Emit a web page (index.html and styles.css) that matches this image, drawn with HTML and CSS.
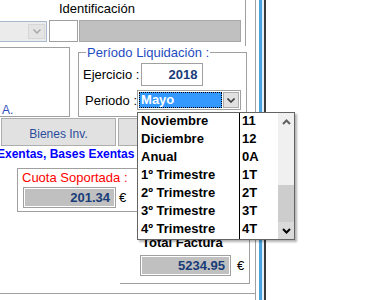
FILE: index.html
```html
<!DOCTYPE html>
<html lang="es">
<head>
    <meta charset="UTF-8" />
    <title>Liquidación IVA</title>
    <link rel="stylesheet" href="styles.css">
</head>
<body>
    <div class="screen">
        <div class="form">
            <div class="top-section">
                <div class="ident">Identificación</div>
                <div class="fields">
                    <div class="combo-off">
                        <span class="arrow-off">
                            <svg width="8" height="5" viewBox="0 0 8 5"><polyline points="0.5,0.5 4,4 7.5,0.5" fill="none" stroke="#a8a8a8" stroke-width="1.5"/></svg>
                        </span>
                    </div>
                    <div class="box-white"></div>
                    <div class="box-gray"></div>
                </div>
            </div>

            <div class="mid">
                <div class="left-panel"><span class="company">A.</span></div>
                <fieldset class="period">
                    <legend>Período Liquidación :</legend>
                    <div class="row row-year">
                        <label>Ejercicio :</label>
                        <div class="year-input">2018</div>
                    </div>
                    <div class="row row-period">
                        <label>Periodo :</label>
                        <div class="period-combo">
                            <span class="selected">Mayo</span>
                            <span class="arrow">
                                <svg width="8" height="5" viewBox="0 0 8 5"><polyline points="0.5,0.5 4,4 7.5,0.5" fill="none" stroke="#404040" stroke-width="1.6"/></svg>
                            </span>
                        </div>
                    </div>
                </fieldset>
            </div>

            <div class="tabs">
                <button class="tab">Bienes Inv.</button>
                <button class="tab tab-wide"></button>
            </div>

            <div class="exentas">Exentas, Bases Exentas</div>

            <div class="cuota-box">
                <div class="cuota-label">Cuota Soportada :</div>
                <div class="amount-row">
                    <div class="amount">201.34</div>
                    <span class="euro">€</span>
                </div>
            </div>

            <div class="total-box">
                <div class="total-label">Total Factura</div>
                <div class="amount-row total-row">
                    <div class="amount amount-total">5234.95</div>
                    <span class="euro euro-total">€</span>
                </div>
            </div>

            <div class="bottom-line"></div>

            <div class="dropdown">
                <div class="items">
                    <div class="item"><span class="name">Noviembre</span><span class="code">11</span></div>
                    <div class="item"><span class="name">Diciembre</span><span class="code">12</span></div>
                    <div class="item"><span class="name">Anual</span><span class="code">0A</span></div>
                    <div class="item"><span class="name">1º Trimestre</span><span class="code">1T</span></div>
                    <div class="item"><span class="name">2º Trimestre</span><span class="code">2T</span></div>
                    <div class="item"><span class="name">3º Trimestre</span><span class="code">3T</span></div>
                    <div class="item"><span class="name">4º Trimestre</span><span class="code">4T</span></div>
                </div>
                <div class="scrollbar">
                    <div class="sb-btn">
                        <svg width="9" height="6" viewBox="0 0 9 6"><polyline points="1,5 4.5,1.5 8,5" fill="none" stroke="#606060" stroke-width="2"/></svg>
                    </div>
                    <div class="sb-track"><div class="sb-thumb"></div></div>
                    <div class="sb-btn sb-down">
                        <svg width="9" height="6" viewBox="0 0 9 6"><polyline points="1,1 4.5,4.5 8,1" fill="none" stroke="#000000" stroke-width="2"/></svg>
                    </div>
                </div>
            </div>
        </div>
        <div class="sash"></div>
    </div>
</body>
</html>
```

FILE: styles.css
```css
body {
    margin: 0;
    background-color: #ffffff;
    font-family: "Liberation Sans", Arial, sans-serif;
    font-size: 13px;
    color: #000000;
}

.screen {
    display: flex;
    height: 300px;
    overflow: hidden;
}

.form {
    position: relative;
    width: 255px;
    flex-shrink: 0;
    border-right: 1px solid #a0a0a0;
}

.sash {
    margin-left: 3px;
    width: 2px;
    border-left: 3px solid #4aa3df;
    border-right: 2px solid #3a3a3a;
    background-color: #e6f0fa;
}

/* cabecera */

.top-section {
    width: 245px;
    height: 46px;
    border-right: 1px solid #a0a0a0;
}

.ident {
    height: 20px;
    line-height: 18px;
    padding-left: 59px;
}

.fields {
    display: flex;
    height: 22px;
}

.combo-off {
    width: 58px;
    height: 21px;
    margin: 1px 0 0 -11px;
    box-sizing: border-box;
    border: 1px solid #a9b8cf;
    background-color: #ebebeb;
    display: flex;
    justify-content: flex-end;
    align-items: center;
    padding-right: 1px;
}

.arrow-off {
    width: 17px;
    height: 15px;
    box-sizing: border-box;
    border: 1px solid #d6d6d6;
    background-color: #e4e4e4;
    display: flex;
    align-items: center;
    justify-content: center;
}

.box-white {
    width: 29px;
    height: 22px;
    margin-left: 2px;
    box-sizing: border-box;
    border: 1px solid #a0a0a0;
    background-color: #ffffff;
}

.box-gray {
    width: 162px;
    height: 22px;
    margin-left: 1px;
    box-sizing: border-box;
    border: 1px solid #a8a8a8;
    background-color: #c0c0c0;
}

/* periodo */

.mid {
    display: flex;
    height: 71px;
}

.left-panel {
    width: 71px;
    height: 70px;
    margin: 1px 0 0 -1px;
    box-sizing: border-box;
    border: 1px solid #a0a0a0;
    display: flex;
    align-items: flex-end;
    padding-left: 2px;
}

.company {
    font-size: 12px;
    line-height: 12px;
    color: #2f4fc0;
}

.period {
    width: 169px;
    margin: -1px 0 0 8px;
    padding: 0 0 6px 0;
    box-sizing: border-box;
    min-width: 0;
    border: 1px solid #a0a0a0;
}

    .period legend {
        margin-left: 7px;
        padding: 0 1px;
        line-height: 15px;
        color: #1e4cc0;
    }

.row {
    display: flex;
    align-items: center;
}

.row-year {
    margin: 3px 0 0 4px;
}

.row-period {
    margin: 4px 0 0 6px;
}

.year-input {
    width: 62px;
    height: 23px;
    margin-left: 2px;
    box-sizing: border-box;
    border: 1px solid #a0a0a0;
    text-align: right;
    padding-right: 5px;
    line-height: 21px;
    font-weight: bold;
    color: #183c78;
}

.period-combo {
    width: 104px;
    height: 20px;
    box-sizing: border-box;
    border: 1px solid #a0a0a0;
    padding: 1px;
    display: flex;
}

.selected {
    flex: 1;
    margin-right: 1px;
    padding-left: 2px;
    background-color: #3399ff;
    color: #ffffff;
    font-weight: bold;
    line-height: 16px;
    outline: 1px dotted #000000;
    outline-offset: -1px;
}

.arrow {
    width: 16px;
    box-sizing: border-box;
    border: 1px solid #adadad;
    background-color: #e1e1e1;
    display: flex;
    align-items: center;
    justify-content: center;
}

/* pestañas */

.tabs {
    display: flex;
    height: 28px;
    margin-top: 1px;
}

.tab {
    font: inherit;
    font-size: 12px;
    color: #2b4c9c;
    margin: 0 0 0 1px;
    width: 115px;
    padding: 0 0 4px 0;
    background-color: #e1e1e1;
    border: 1px solid #adadad;
    display: flex;
    align-items: flex-end;
    justify-content: center;
}

.tab-wide {
    margin-left: 2px;
    width: 137px;
}

.exentas {
    margin-left: -3px;
    line-height: 16px;
    font-size: 12px;
    font-weight: bold;
    color: #0000ff;
    white-space: nowrap;
}

/* importes */

.cuota-box {
    width: 233px;
    height: 44px;
    margin: 6px 0 0 17px;
    box-sizing: border-box;
    border: 1px solid #a0a0a0;
    padding: 1px 0 0 4px;
}

.cuota-label {
    line-height: 15px;
    color: #ff0000;
}

.amount-row {
    display: flex;
    align-items: center;
    margin: 2px 0 0 1px;
}

.amount {
    width: 93px;
    height: 21px;
    box-sizing: border-box;
    border: 1px solid #a0a0a0;
    box-shadow: inset 0 0 0 1px #ffffff;
    background-color: #c0c0c0;
    text-align: right;
    padding-right: 5px;
    line-height: 19px;
    font-weight: bold;
    color: #183c78;
}

.euro {
    margin-left: 3px;
}

.total-box {
    width: 130px;
    height: 72px;
    margin-left: 120px;
    box-sizing: border-box;
    border-right: 1px solid #a0a0a0;
    border-bottom: 1px solid #a0a0a0;
    padding: 23px 0 0 22px;
}

.total-label {
    line-height: 15px;
    font-weight: bold;
}

.total-row {
    margin: 5px 0 0 -2px;
}

.amount-total {
    width: 91px;
}

.euro-total {
    margin-left: 6px;
}

.bottom-line {
    margin-top: 9px;
    border-top: 1px solid #a0a0a0;
}

/* lista desplegable */

.dropdown {
    position: absolute;
    left: 137px;
    top: 112px;
    width: 158px;
    height: 128px;
    box-sizing: border-box;
    border: 1px solid #646464;
    background-color: #ffffff;
    box-shadow: 2px 2px 2px rgba(0,0,0,0.3);
    display: flex;
    z-index: 2;
}

.items {
    width: 140px;
}

.item {
    display: flex;
    height: 18px;
    line-height: 16px;
    font-weight: bold;
}

    .item .name {
        width: 102px;
        box-sizing: border-box;
        border-right: 1px solid #000000;
        padding-left: 3px;
    }

    .item .code {
        padding-left: 2px;
    }

.scrollbar {
    width: 16px;
    background-color: #f0f0f0;
    display: flex;
    flex-direction: column;
}

.sb-btn {
    height: 17px;
    display: flex;
    align-items: center;
    justify-content: center;
}

.sb-track {
    flex: 1;
}

.sb-thumb {
    margin-top: 55px;
    height: 37px;
    background-color: #cdcdcd;
}

.sb-down {
    background-color: #dadada;
}
```
